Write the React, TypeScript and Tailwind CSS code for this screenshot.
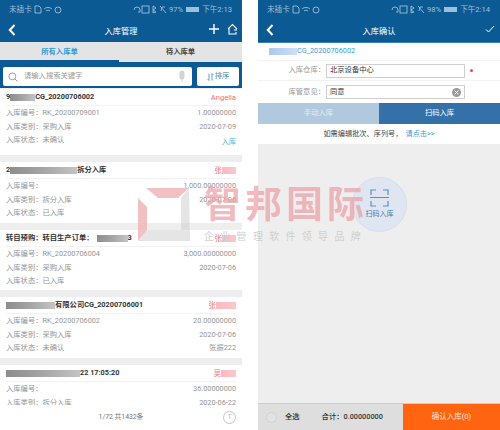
import React from "react";

const FONT = "font-['Roboto','Noto_Sans_CJK_SC',sans-serif]";

function Redact({ w, light = false, red = false }: { w: string; light?: boolean; red?: boolean }) {
  const c = red
    ? "from-[#fbb9bf] to-[#fbc9ce]"
    : light
      ? "from-[#a9c9ee] to-[#cfe0f5]"
      : "from-[#8d8d8d] via-[#a5a5a5] to-[#c4c4c4]";
  return <span className={`inline-block h-[7px] ${w} bg-gradient-to-r ${c} blur-[0.6px]`} />;
}

function StatusBar({ battery, time }: { battery: string; time: string }) {
  return (
    <div className="h-[20px] flex items-center justify-between pl-[9px] pr-[10px] text-[7.6px] text-[#9fc0d8]">
      <div className="flex items-center gap-[2px]">
        <span>未插卡</span>
        <svg width="28" height="9" viewBox="0 0 28 9" fill="none" stroke="#9cc0da" strokeWidth="0.9">
          <path d="M1 1h4l2 2v5H1z" />
          <path d="M10 4c2-2 6-2 8 0M12 6c1-1 3-1 4 0" />
          <circle cx="24" cy="5" r="3" />
        </svg>
      </div>
      <div className="flex items-center gap-[2px]">
        <svg width="34" height="9" viewBox="0 0 34 9" fill="none" stroke="#9cc0da" strokeWidth="0.9">
          <path d="M1 5a3 3 0 1 1 6 0v2H5" />
          <rect x="9" y="1" width="7" height="7" />
          <path d="M20 1l3 2-3 2 3 2-3 1zM27 1l6 7M28 6l1-4h3" />
        </svg>
        <span>{battery}</span>
        <span className="w-[13px] h-[5px] bg-[#9cc0da] mx-[1px]" />
        <span>{time}</span>
      </div>
    </div>
  );
}

function Back() {
  return (
    <svg width="8" height="12" viewBox="0 0 8 12" fill="none" stroke="#fff" strokeWidth="2">
      <path d="M6.5 1L1.8 6l4.7 5" />
    </svg>
  );
}

function Card({
  title,
  who,
  no,
  qty,
  type,
  date,
  state,
  extra,
  extraBlue,
  size,
}: {
  title: React.ReactNode;
  who: React.ReactNode;
  no: string;
  qty: string;
  type: string;
  date: string;
  state?: string;
  extra?: string;
  extraBlue?: boolean;
  size: string;
}) {
  return (
    <div className={`bg-white shrink-0 ${size}`}>
      <div className="h-[17px] pt-[1px] mx-[6px] flex items-center justify-between border-b border-[#f2f2f2] text-[7.3px] font-bold text-[#333]">
        <div className="flex items-center">{title}</div>
        <div className="font-normal text-[7.6px]">{who}</div>
      </div>
      <div className="mx-[6px] text-[7.3px] leading-[13.6px] text-[#949494]">
        <div className="flex justify-between">
          <span>入库编号：{no}</span>
          <span>{qty}</span>
        </div>
        <div className="flex justify-between">
          <span>入库类别：{type}</span>
          <span>{date}</span>
        </div>
        {state && (
          <div className="flex justify-between">
            <span>入库状态：{state}</span>
            {extra && <span className={extraBlue ? "text-[#55b2e6] pt-[2px]" : ""}>{extra}</span>}
          </div>
        )}
      </div>
    </div>
  );
}

function LeftPhone() {
  return (
    <div className="w-[242px] h-[430px] flex flex-col bg-[#eeeeee] shrink-0 overflow-hidden">
      <div className="bg-[#0c5a94] shrink-0">
        <StatusBar battery="97%" time="下午2:13" />
        <div className="h-[22px] relative flex items-center justify-center text-[8.2px] text-white">
          <div className="absolute left-[8px] top-[4px]">
            <Back />
          </div>
          入库管理
          <div className="absolute right-[4px] top-[3px] flex items-center gap-[7px]">
            <svg width="12" height="12" viewBox="0 0 12 12" stroke="#fff" strokeWidth="1.4">
              <path d="M6 1v10M1 6h10" />
            </svg>
            <svg width="11" height="12" viewBox="0 0 11 12" fill="none" stroke="#fff" strokeWidth="1.1">
              <path d="M1 6l4.5-4.5L10 6M2 5.5V11h7V9M7 7h3" />
            </svg>
          </div>
        </div>
      </div>
      <div className="h-[21px] flex bg-[#e4e4e4] text-[7.3px] font-bold shrink-0 items-stretch">
        <div className="w-[119px] flex items-center justify-center text-[#2f9ade] border-b-[3px] border-[#0c5a94] pt-[2px]">
          所有入库单
        </div>
        <div className="flex-1 flex items-center justify-center text-[#444] border-b border-[#0c5a94]">
          待入库单
        </div>
      </div>
      <div className="h-[25px] bg-[#0c5a94] flex items-start gap-[5px] px-[3px] pt-[4px] shrink-0">
        <div className="w-[189px] h-[19px] bg-white rounded-[2px] flex items-center pl-[5px] pr-[6px]">
          <svg width="10" height="10" viewBox="0 0 11 11" fill="none" stroke="#888" strokeWidth="0.9">
            <circle cx="4.8" cy="4.8" r="3.8" />
            <path d="M7.6 7.6L10.5 10.5" />
          </svg>
          <span className="ml-[6px] text-[7.3px] text-[#999] flex-1">请输入搜索关键字</span>
          <svg width="8" height="13" viewBox="0 0 8 13" fill="#d4d4d4">
            <rect x="1.5" y="0.5" width="5" height="9" rx="2.5" />
            <rect x="3.5" y="9" width="1" height="3" />
          </svg>
        </div>
        <div className="w-[42px] h-[19px] bg-white rounded-[2px] flex items-center justify-center gap-[1px] text-[7.3px] text-[#4a86b5]">
          <svg width="7" height="8" viewBox="0 0 7 8" fill="none" stroke="#4a86b5" strokeWidth="0.8">
            <path d="M2 0.5V7.5L0.5 6M5 7.5V0.5L6.5 2" />
          </svg>
          排序
        </div>
      </div>
      <div className="flex-1 overflow-hidden pt-[1px]">
        <Card
          size="h-[66px] mb-[7px]"
          title={
            <>
              9<Redact w="w-[25px]" />
              CG_20200706002
            </>
          }
          who={<span className="text-[#f0707c]">Angelia</span>}
          no="RK_20200709001"
          qty="1.00000000"
          type="采购入库"
          date="2020-07-09"
          state="未确认"
          extra="入库"
          extraBlue
        />
        <Card
          size="h-[61px] mb-[7px]"
          title={
            <>
              2<Redact w="w-[67px]" />
              拆分入库
            </>
          }
          who={
            <span className="flex items-center text-[#f0707c]">
              张<Redact red w="w-[14px]" />
            </span>
          }
          no=""
          qty="1,000.00000000"
          type="拆分入库"
          date="2020-07-06"
          state="已入库"
        />
        <Card
          size="h-[60px] mb-[7px]"
          title={
            <>
              转自预购：转自生产订单：
              <span className="ml-[3px]" />
              <Redact w="w-[31px]" />3
            </>
          }
          who={
            <span className="flex items-center text-[#f0707c]">
              张<Redact red w="w-[14px]" />
            </span>
          }
          no="RK_20200706004"
          qty="3,000.00000000"
          type="采购入库"
          date="2020-07-06"
          state="已入库"
        />
        <Card
          size="h-[61px] mb-[7px]"
          title={
            <>
              <Redact w="w-[49px]" />
              有限公司CG_20200706001
            </>
          }
          who={
            <span className="flex items-center text-[#f0707c]">
              张<Redact red w="w-[20px]" />
            </span>
          }
          no="RK_20200706002"
          qty="20.00000000"
          type="采购入库"
          date="2020-07-06"
          state="未确认"
          extra="张振222"
        />
        <Card
          size=""
          title={
            <>
              <Redact w="w-[74px]" />
              22 17:05:20
            </>
          }
          who={
            <span className="flex items-center text-[#f0707c]">
              吴<Redact red w="w-[15px]" />
            </span>
          }
          no=""
          qty="36.00000000"
          type="拆分入库"
          date="2020-06-22"
        />
      </div>
      <div className="h-[25px] bg-white shrink-0 relative flex items-center justify-center text-[6.8px] text-[#777]">
        1/72 共1432条
        <div className="absolute right-[6px] top-[6px] w-[13px] h-[13px] rounded-full border border-[#c4c4c4] flex items-center justify-center text-[7px] text-[#bbb]">
          T
        </div>
      </div>
    </div>
  );
}

function RightPhone() {
  return (
    <div className="w-[242px] h-[430px] flex flex-col bg-[#eeeeee] shrink-0 overflow-hidden relative">
      <div className="bg-[#0c5a94] shrink-0 border-b border-[#3a80b4]">
        <StatusBar battery="98%" time="下午2:14" />
        <div className="h-[22px] relative flex items-center justify-center text-[8.2px] text-white">
          <div className="absolute left-[8px] top-[4px]">
            <Back />
          </div>
          入库确认
          <div className="absolute right-[5px] top-[4px]">
            <svg width="10" height="10" viewBox="0 0 10 10" fill="none" stroke="#fff" strokeWidth="1">
              <path d="M1 5.5l2.5 2.5L9 2" />
            </svg>
          </div>
        </div>
      </div>
      <div className="h-[18px] bg-white flex items-center pl-[11px] text-[7.3px] text-[#3c9ce0] border-b border-[#f2f2f2] shrink-0">
        <Redact light w="w-[28px]" />
        CG_20200706002
      </div>
      <div className="h-[20px] bg-white flex items-center text-[7.3px] text-[#999] border-b border-[#f2f2f2] shrink-0">
        <span className="w-[67px] text-right">入库仓库：</span>
        <div className="ml-[1px] w-[139px] h-[14px] border border-[#cfcfcf] flex items-center pl-[3px] text-[7.3px] text-[#333]">
          北京设备中心
        </div>
        <span className="ml-[5px] w-[3px] h-[3px] rounded-full bg-[#e84a55]" />
      </div>
      <div className="h-[22px] bg-white flex items-center text-[7.3px] text-[#999] shrink-0">
        <span className="w-[67px] text-right">库管意见：</span>
        <div className="ml-[1px] w-[139px] h-[14px] border border-[#cfcfcf] flex items-center justify-between px-[3px] text-[7.3px] text-[#333]">
          同意
          <span className="w-[9px] h-[9px] rounded-full bg-[#999] flex items-center justify-center">
            <svg width="5" height="5" viewBox="0 0 5 5" stroke="#fff" strokeWidth="0.9">
              <path d="M0.5 0.5l4 4M4.5 0.5l-4 4" />
            </svg>
          </span>
        </div>
      </div>
      <div className="h-[21px] flex text-[7.3px] text-white shrink-0">
        <div className="w-[121px] bg-[#b1c9df] flex items-center justify-center text-[#e4edf5]">手动入库</div>
        <div className="flex-1 bg-[#3471a9] flex items-center justify-center">扫码入库</div>
      </div>
      <div className="h-[20px] bg-white flex items-center justify-center text-[7.2px] text-[#444] shrink-0">
        如需编辑批次、序列号，<span className="text-[#4a93d0] ml-[3px]">请点击&gt;&gt;</span>
      </div>
      <div className="flex-1" />
      <div className="h-[27px] flex shrink-0 border-t border-[#cccccc] bg-[#dedede]">
        <div className="w-[145px] flex items-center text-[7.3px] text-[#333] font-medium">
          <span className="ml-[8px] w-[11px] h-[11px] rounded-full border border-[#d2d2d2] bg-[#e2e2e2]" />
          <span className="ml-[8px]">全选</span>
          <span className="ml-[22px]">合计：0.00000000</span>
        </div>
        <div className="flex-1 bg-[#ff6510] flex items-center justify-center text-[7.5px] text-[#ffe2d0]">
          确认入库(0)
        </div>
      </div>
      <div className="absolute left-[94px] top-[177px] w-[55px] h-[55px] rounded-full bg-[#dfe6f1] border border-[#d4dfee] flex flex-col items-center justify-center text-[7px] text-[#3f7cb4]">
        <svg width="19" height="18" viewBox="0 0 19 18" fill="none" stroke="#5a90bd" strokeWidth="1.2">
          <path d="M1 6V1h5M13 1h5v5M18 12v5h-5M6 17H1v-5M0 8.5h19" />
        </svg>
        <span className="mt-[2px]">扫码入库</span>
      </div>
    </div>
  );
}

export default function App() {
  return (
    <div className={`w-[500px] h-[430px] bg-white flex justify-between relative overflow-hidden ${FONT}`}>
      <LeftPhone />
      <RightPhone />
      <div className="absolute left-[137px] top-[187px] w-[235px] h-[70px] pointer-events-none flex items-start">
        <svg width="56" height="55" viewBox="0 0 56 55" className="shrink-0">
          <path d="M9 1H52L41 11H21z" fill="#efb5b9" opacity="0.85" />
          <path d="M1 11L10 20V43L1 54z" fill="#efb5b9" opacity="0.85" />
          <path d="M52 1L53 54H1L10 43H44V11z" fill="#cfcfcf" opacity="0.55" />
        </svg>
        <div className="ml-[11px] flex flex-col">
          <div className="text-[37px] leading-[38px] font-bold text-[#eb9ea5] opacity-70 tracking-[4px] whitespace-nowrap">
            智邦国际
          </div>
          <div className="text-[10px] leading-[12px] text-[#cfcfcf] tracking-[6.3px] whitespace-nowrap mt-[6px]">
            企业管理软件领导品牌
          </div>
        </div>
      </div>
    </div>
  );
}
